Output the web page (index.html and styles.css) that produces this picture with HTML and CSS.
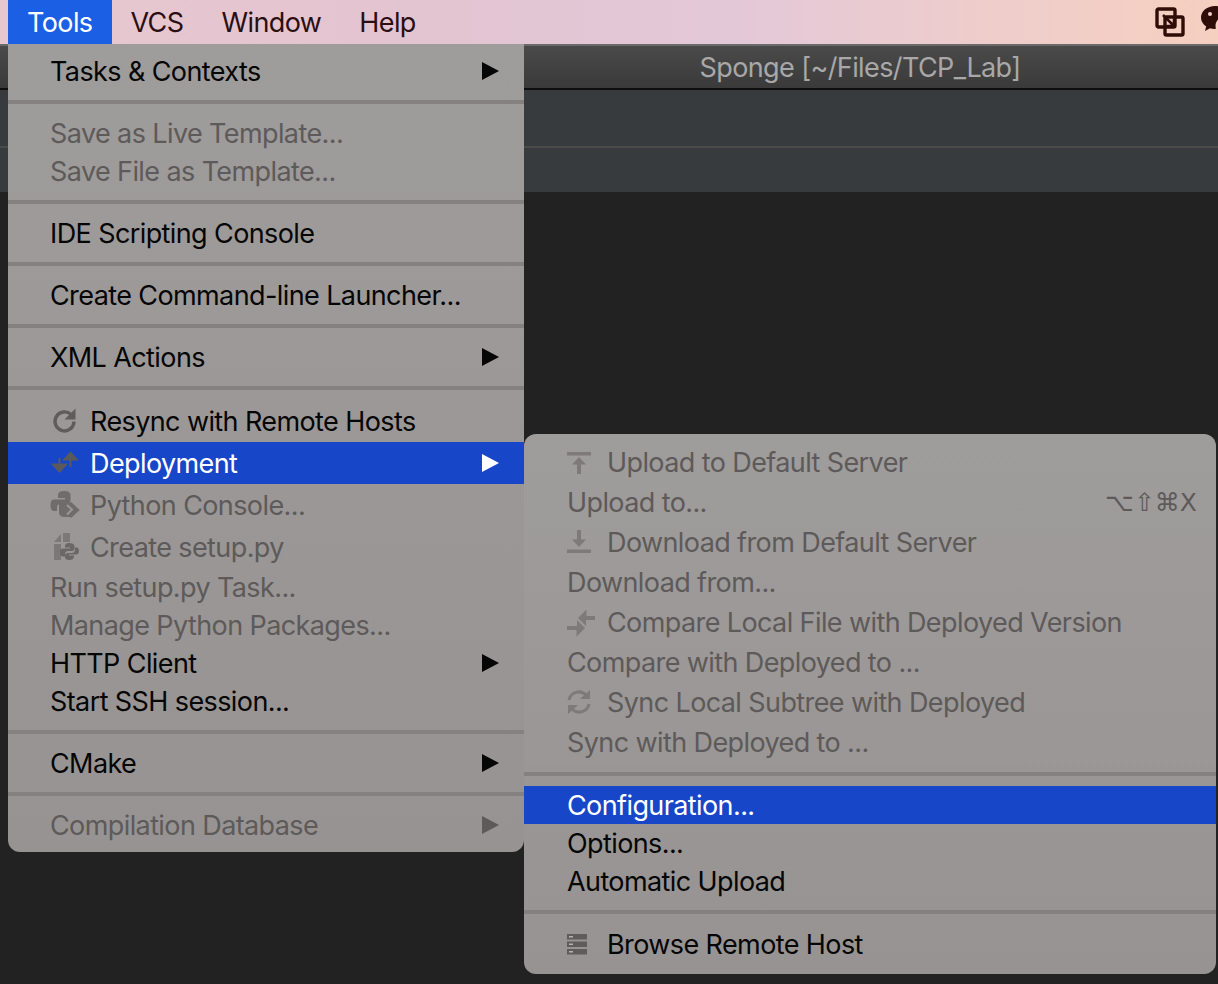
FILE: index.html
```html
<!DOCTYPE html>
<html lang="en">
<head>
<meta charset="utf-8">
<title>Tools menu</title>
<link rel="stylesheet" href="styles.css">
</head>
<body>
<div class="screen">
  <header class="menubar">
    <nav class="menubar-items">
      <span class="menubar-item active">Tools</span>
      <span class="menubar-item">VCS</span>
      <span class="menubar-item">Window</span>
      <span class="menubar-item">Help</span>
    </nav>
    <div class="tray">
      <svg class="tray-vm" width="30" height="30" viewBox="0 0 30 30">
        <rect x="2" y="2" width="18" height="18" rx="1.5" fill="none" stroke="#2e0d08" stroke-width="3.4"/>
        <rect x="10" y="10" width="18" height="18" rx="1.5" fill="none" stroke="#2e0d08" stroke-width="3.4"/>
        <path d="M8 8l11 11M19 12v7h-7" fill="none" stroke="#2e0d08" stroke-width="2.6"/>
      </svg>
      <svg class="tray-chat" width="32" height="32" viewBox="0 0 32 32">
        <path d="M14 0C6.3 0 0 5 0 11.500c0 3.700 2 6.800 5.200 8.900L4 25l5-2.700c1.500.4 3 .6 4.500.6 .5 0 1 0 1.500-.1-.3-1-.5-2-.5-3 0-6 5.500-10.500 12.500-10.500C25.500 3.700 20.200 0 14 0z" fill="#2e0d08"/>
        <circle cx="9" cy="8" r="2" fill="#f1cfc8"/>
        <circle cx="19" cy="8" r="2" fill="#f1cfc8"/>
        <ellipse cx="28" cy="20" rx="11" ry="9.500" fill="#2e0d08"/>
        <circle cx="24" cy="18" r="1.600" fill="#f1cfc8"/>
        <circle cx="31" cy="18" r="1.600" fill="#f1cfc8"/>
      </svg>
    </div>
  </header>

  <section class="ide">
    <div class="titlebar"><span class="title">Sponge [~/Files/TCP_Lab]</span></div>
    <div class="toolbar"></div>
    <div class="tabbar"></div>
    <div class="editor"></div>
  </section>

  <div class="menu menu-main">
    <div class="row"><span class="label">Tasks &amp; Contexts</span><span class="arrow"></span></div>
    <div class="sep"></div>
    <div class="row off"><span class="label">Save as Live Template...</span></div>
    <div class="row off"><span class="label">Save File as Template...</span></div>
    <div class="sep"></div>
    <div class="row"><span class="label">IDE Scripting Console</span></div>
    <div class="sep"></div>
    <div class="row"><span class="label">Create Command-line Launcher...</span></div>
    <div class="sep"></div>
    <div class="row"><span class="label">XML Actions</span><span class="arrow"></span></div>
    <div class="sep"></div>
    <div class="row tall">
      <svg class="icon" width="30" height="30" viewBox="0 0 30 30"><path d="M24 15.500a9.500 9.500 0 1 1-3-7" fill="none" stroke="#5f5c5b" stroke-width="3.400"/><path d="M25.500 2.500v11h-11z" fill="#5f5c5b"/></svg>
      <span class="label">Resync with Remote Hosts</span>
    </div>
    <div class="row tall selected">
      <svg class="icon" width="30" height="30" viewBox="0 0 30 30"><path d="M9.500 10v12M3 16.500l6.500 7 6.500-7z" fill="#5a5a5a" stroke="#5a5a5a" stroke-width="2"/><path d="M20.500 19V7M14.500 11.500l6-6.500 6 6.500z" fill="#5a5a5a" stroke="#5a5a5a" stroke-width="2"/></svg>
      <span class="label">Deployment</span><span class="arrow"></span>
    </div>
    <div class="row tall off">
      <svg class="icon" width="30" height="30" viewBox="0 0 30 30"><path d="M14 1c-4 0-6 1.500-6 4v3h7v1.500H4c-2.500 0-3.500 2-3.500 5.500s1 6 3.500 6h3v-3.500c0-2.500 2-4 4.500-4H17c2 0 3.500-1.500 3.500-3.500V5c0-2.500-2.500-4-6.500-4z" fill="#6f6c6b"/><path d="M9 12.500h12l6 6-7 8.500h-5c-3 0-6-1.500-6-4v-4.500c0-3 0-6 0-6z" fill="#6f6c6b"/><path d="M17 15l5 4.500-5 5" fill="none" stroke="#9a9695" stroke-width="2"/><path d="M20 13l7.500 7-7.500 7" fill="none" stroke="#6f6c6b" stroke-width="3"/></svg>
      <span class="label">Python Console...</span>
    </div>
    <div class="row tall off">
      <svg class="icon" width="30" height="30" viewBox="0 0 30 30"><path d="M11 2v8H4z" fill="#7b7877"/><path d="M13 1h7v9h-7zM4 12h7v16H4z" fill="#7b7877"/><path d="M19 11c-3 0-4 1.500-4 3v1.500h5v1h-7c-2 0-3 1.500-3 4s1 4 3 4h2v-2.500c0-1.500 1-3 3-3h4c1.500 0 2.500-1 2.500-2.500V14c0-2-2.500-3-5.500-3z" fill="#6a6766"/><path d="M19 28c3 0 5-1 5-3v-1.500h-5v-1h7c2 0 3-1.500 3-3.500s-1-3.500-2-3.500h-2v2c0 2-1.500 3.500-3 3.500h-4c-1.500 0-3 1-3 2.500V25c0 2 1.500 3 4 3z" fill="#6a6766"/></svg>
      <span class="label">Create setup.py</span>
    </div>
    <div class="row off"><span class="label">Run setup.py Task...</span></div>
    <div class="row off"><span class="label">Manage Python Packages...</span></div>
    <div class="row"><span class="label">HTTP Client</span><span class="arrow"></span></div>
    <div class="row"><span class="label">Start SSH session...</span></div>
    <div class="sep"></div>
    <div class="row"><span class="label">CMake</span><span class="arrow"></span></div>
    <div class="sep"></div>
    <div class="row off"><span class="label">Compilation Database</span><span class="arrow"></span></div>
  </div>

  <div class="menu menu-sub">
    <div class="row wide off">
      <svg class="icon" width="26" height="26" viewBox="0 0 26 26"><path d="M1 3h24v3.500H1z" fill="#7d7a79"/><path d="M13 8l7 7.500h-5V25h-4v-9.500H6z" fill="#7d7a79"/></svg>
      <span class="label">Upload to Default Server</span>
    </div>
    <div class="row wide off"><span class="label">Upload to...</span><span class="shortcut">⌥⇧⌘X</span></div>
    <div class="row wide off">
      <svg class="icon" width="26" height="26" viewBox="0 0 26 26"><path d="M1 20.500h24V24H1z" fill="#7d7a79"/><path d="M11 1h4v9.500h5L13 18l-7-7.500h5z" fill="#7d7a79"/></svg>
      <span class="label">Download from Default Server</span>
    </div>
    <div class="row wide off"><span class="label">Download from...</span></div>
    <div class="row wide off">
      <svg class="icon" width="30" height="30" viewBox="0 0 30 30"><path d="M1 19h10v-6l8 8-8.500 8.500V23H1zM29 9v4H20v6l-8-8 8.500-8.500V9z" fill="#7d7a79"/></svg>
      <span class="label">Compare Local File with Deployed Version</span>
    </div>
    <div class="row wide off"><span class="label">Compare with Deployed to ...</span></div>
    <div class="row wide off">
      <svg class="icon" width="26" height="26" viewBox="0 0 26 26"><path d="M3 11a10 10 0 0 1 17-5" fill="none" stroke="#7d7a79" stroke-width="3"/><path d="M23 15a10 10 0 0 1-17 5" fill="none" stroke="#7d7a79" stroke-width="3"/><path d="M14 10h10V1zM12 16H2v9z" fill="#7d7a79"/></svg>
      <span class="label">Sync Local Subtree with Deployed</span>
    </div>
    <div class="row wide off"><span class="label">Sync with Deployed to ...</span></div>
    <div class="sep"></div>
    <div class="row selected"><span class="label">Configuration...</span></div>
    <div class="row"><span class="label">Options...</span></div>
    <div class="row"><span class="label">Automatic Upload</span></div>
    <div class="sep"></div>
    <div class="row wide">
      <svg class="icon" width="22" height="22" viewBox="0 0 22 22"><path d="M1 1h20v5.500H1zM1 8.500h20V14H1zM1 16h20v5.500H1z" fill="#5f5c5b"/><path d="M3 3h4v1.500H3zM3 10.500h4V12H3zM3 18h4v1.500H3z" fill="#b5b2b1"/></svg>
      <span class="label">Browse Remote Host</span>
    </div>
  </div>
</div>
</body>
</html>
```
FILE: styles.css
```css
* { box-sizing: border-box; }
html, body { margin: 0; height: 100%; }
body { background: #222222; overflow: hidden; font-family: Inter, "Liberation Sans", sans-serif; }
.screen { position: relative; width: 1218px; height: 984px; display: flex; flex-direction: column; overflow: hidden; }

.menubar { flex: 0 0 44px; display: flex; justify-content: space-between; align-items: center; padding-left: 8px; background: linear-gradient(90deg, #e8c8cf 0%, #e3c4d0 30%, #e3c8d8 60%, #f0cec9 85%, #f5cfc0 100%); }
.menubar-items { display: flex; height: 100%; }
.menubar-item { display: flex; align-items: center; padding: 0 19px 0 19px; font-size: 27px; letter-spacing: -0.6px; color: #2a0f12; }
.menubar-item.active { background: #1b5fe5; color: #fff; }
.tray { display: flex; align-items: center; gap: 16px; margin-right: -15px; }

.ide { flex: 1; display: flex; flex-direction: column; }
.titlebar { flex: 0 0 46px; display: flex; align-items: center; justify-content: center; padding-left: 502px; background: linear-gradient(#4a4a4b, #3a3a3a); border-top: 2px solid #6a6a6a; border-bottom: 2px solid #0e0e0e; }
.title { font-size: 27px; letter-spacing: -0.6px; color: #a8a8a8; }
.toolbar { flex: 0 0 58px; background: #373b3e; border-bottom: 2px solid #4a4b4b; }
.tabbar { flex: 0 0 44px; background: #373b3e; }
.editor { flex: 1; background: #222222; }

.menu { position: absolute; background: linear-gradient(#9f9c9c, #979392); padding: 8px 0; font-size: 27px; letter-spacing: -0.6px; color: #060606; }
.menu-main { left: 8px; top: 44px; width: 516px; height: 808px; border-radius: 0 0 12px 12px; }
.menu-sub { left: 524px; top: 434px; width: 692px; height: 540px; border-radius: 12px; }

.row { position: relative; display: flex; align-items: center; height: 38px; padding-left: 42px; white-space: nowrap; }
.menu-sub .row { padding-left: 43px; }
.row.tall { height: 42px; }
.row.wide { height: 40px; }
.row.off { color: #5d5a59; }
.row.selected { background: #1746c8; color: #fff; }
.sep { height: 4px; margin: 10px 0; background: #858181; }
.label { line-height: 1; }
.icon { position: absolute; left: 42px; top: 50%; transform: translateY(-50%); }
.icon + .label { margin-left: 40px; }
.arrow { position: absolute; right: 25px; top: 50%; transform: translateY(-50%); width: 0; height: 0; border-left: 17px solid currentColor; border-top: 9px solid transparent; border-bottom: 9px solid transparent; }
.shortcut { margin-left: auto; margin-right: 19px; font-family: "DejaVu Sans", sans-serif; font-size: 25px; letter-spacing: 0; }
```
